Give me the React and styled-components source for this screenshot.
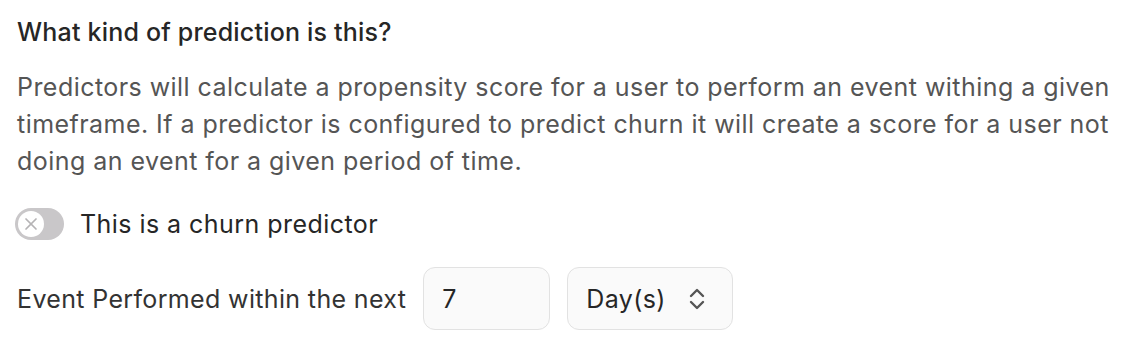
import React from 'react';
import styled, { createGlobalStyle } from 'styled-components';

const GlobalStyle = createGlobalStyle`
  body {
    margin: 0;
    background: #ffffff;
    font-family: Inter, "Noto Sans", sans-serif;
    letter-spacing: 0.45px;
  }
`;

const Wrapper = styled.div`
  padding: 16px 17px;
  display: flex;
  flex-direction: column;
`;

const Title = styled.div`
  font-size: 25px;
  line-height: 32px;
  font-weight: 500;
  letter-spacing: 0.2px;
  color: #262626;
`;

const Description = styled.p`
  margin: 21px 0 0;
  font-size: 25px;
  line-height: 37px;
  color: #555555;
  white-space: nowrap;
`;

const ToggleRow = styled.label`
  margin-top: 28px;
  display: flex;
  align-items: center;
  gap: 16px;
  font-size: 25px;
  color: #262626;
  cursor: pointer;
`;

const Track = styled.span`
  width: 49px;
  height: 32px;
  margin-left: -2px;
  border-radius: 16px;
  background: ${p => (p.on ? '#333333' : '#c9c7c9')};
  display: flex;
  align-items: center;
  padding: 3px;
  box-sizing: border-box;
`;

const Knob = styled.span`
  width: 26px;
  height: 26px;
  border-radius: 50%;
  background: #ffffff;
  display: flex;
  align-items: center;
  justify-content: center;
`;

const FieldRow = styled.div`
  margin-top: 27px;
  display: flex;
  align-items: center;
  gap: 17px;
  font-size: 25px;
  color: #333333;
  letter-spacing: 0.35px;
`;

const Box = styled.div`
  height: 63px;
  width: ${p => p.w}px;
  box-sizing: border-box;
  border: 1px solid #e2e2e2;
  border-radius: 12px;
  background: #fafafa;
  display: flex;
  align-items: center;
  justify-content: space-between;
  padding: 0 ${p => p.pr || 18}px 0 18px;
  font-size: 25px;
  color: #262626;
`;

const Chevrons = () => (
  <svg width="16" height="24" viewBox="0 0 16 24" fill="none" stroke="#555" strokeWidth="2.4" strokeLinecap="round" strokeLinejoin="round">
    <polyline points="2,9 8,3 14,9" />
    <polyline points="2,15 8,21 14,15" />
  </svg>
);

export default function App() {
  return (
    <Wrapper>
      <GlobalStyle />
      <Title>What kind of prediction is this?</Title>
      <Description>
        Predictors will calculate a propensity score for a user to perform an event withing a given
        <br />
        timeframe. If a predictor is configured to predict churn it will create a score for a user not
        <br />
        doing an event for a given period of time.
      </Description>
      <ToggleRow>
        <Track>
          <Knob>
            <svg width="16" height="16" viewBox="0 0 16 16" stroke="#b5b3b5" strokeWidth="1.7" strokeLinecap="round">
              <line x1="3" y1="3" x2="13" y2="13" />
              <line x1="13" y1="3" x2="3" y2="13" />
            </svg>
          </Knob>
        </Track>
        This is a churn predictor
      </ToggleRow>
      <FieldRow>
        Event Performed within the next
        <Box w={127}>7</Box>
        <Box w={166} pr={27}>
          Day(s)
          <Chevrons />
        </Box>
      </FieldRow>
    </Wrapper>
  );
}
